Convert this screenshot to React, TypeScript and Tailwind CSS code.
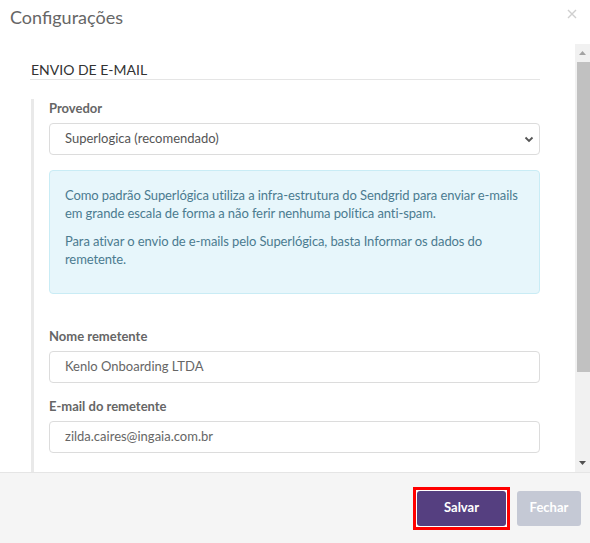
import React from 'react';

const font = { fontFamily: 'Lato, "Open Sans", sans-serif' };

const Label: React.FC<{ children: React.ReactNode }> = ({ children }) => (
  <div className="text-[13px] leading-[18px] font-bold text-[#666] mb-[6px]">{children}</div>
);

const TextInput: React.FC<{ value: string }> = ({ value }) => (
  <div className="h-[32px] border border-[#dcdcdc] rounded-[4px] bg-white flex items-center px-[15px] text-[13px] text-[#666]">
    {value}
  </div>
);

const Scrollbar: React.FC = () => (
  <div className="w-[15px] bg-[#f1f1f1] flex flex-col items-end">
    <div className="h-[18px] w-full flex items-center justify-center">
      <svg width="7" height="4" viewBox="0 0 7 4">
        <path d="M0 4 L3.5 0 L7 4 Z" fill="#a3a3a3" />
      </svg>
    </div>
    <div className="w-[13px] h-[310px] bg-[#c1c1c1]" />
    <div className="flex-1" />
    <div className="h-[18px] w-full flex items-center justify-center">
      <svg width="7" height="4" viewBox="0 0 7 4">
        <path d="M0 0 L3.5 4 L7 0 Z" fill="#505050" />
      </svg>
    </div>
  </div>
);

const App: React.FC = () => {
  return (
    <div className="w-[590px] h-[543px] bg-white flex flex-col overflow-hidden" style={font}>
      {/* header */}
      <div className="h-[44px] flex items-start justify-between pl-[10px] pr-[13px]">
        <div className="text-[18px] leading-[24px] mt-[5px] text-[#666]">Configurações</div>
        <svg width="10" height="10" viewBox="0 0 10 10" className="mt-[9px]">
          <path d="M1 1 L9 9 M9 1 L1 9" stroke="#cfcfcf" strokeWidth="1.4" />
        </svg>
      </div>

      {/* body */}
      <div className="flex-1 flex min-h-0">
        <div className="flex-1 overflow-hidden pl-[30px] pr-[35px] pt-[16px]">
          <div className="text-[14px] leading-[19px] text-[#333] border-b border-[#e5e5e5] pl-px">
            ENVIO DE E-MAIL
          </div>

          <div className="mt-[19px] ml-px border-l-[3px] border-[#e9e9e9] pl-[15px] pb-[40px]">
            <Label>Provedor</Label>
            <div className="h-[32px] border border-[#dcdcdc] rounded-[4px] bg-white flex items-center justify-between pl-[15px] pr-[5px] text-[13px] text-[#555]">
              <span>Superlogica (recomendado)</span>
              <svg width="10" height="7" viewBox="0 0 10 7">
                <path d="M1.5 1.5 L5 5 L8.5 1.5" stroke="#555" strokeWidth="1.8" fill="none" />
              </svg>
            </div>

            <div className="mt-[15px] bg-[#e7f6fb] border border-[#c9ecf5] rounded-[4px] pt-[15px] pb-[15px] pl-[15px] pr-[6px] text-[13px] leading-[18px] text-[#4b7b90] tracking-[-0.1px]">
              <p className="mb-[10px]">
                Como padrão Superlógica utiliza a infra-estrutura do Sendgrid para enviar e-mails em grande escala de forma a não ferir nenhuma política anti-spam.
              </p>
              <p className="mb-[10px]">
                Para ativar o envio de e-mails pelo Superlógica, basta Informar os dados do remetente.
              </p>
            </div>

            <div className="mt-[33px]">
              <Label>Nome remetente</Label>
              <TextInput value="Kenlo Onboarding LTDA" />
            </div>

            <div className="mt-[14px]">
              <Label>E-mail do remetente</Label>
              <TextInput value="zilda.caires@ingaia.com.br" />
            </div>
          </div>
        </div>
        <Scrollbar />
      </div>

      {/* footer */}
      <div className="h-[71px] bg-[#f5f5f5] border-t border-[#e5e5e5] flex items-center justify-end gap-[7px] pr-[9px]">
        <div className="border-[3px] border-[#ff0000] p-px bg-white">
          <button className="w-[89px] h-[35px] bg-[#553f80] rounded-[3px] text-white text-[13px] font-bold">
            Salvar
          </button>
        </div>
        <button className="w-[64px] h-[35px] bg-[#c5c9d5] rounded-[3px] text-white text-[13px] font-bold">
          Fechar
        </button>
      </div>
    </div>
  );
};

export default App;
